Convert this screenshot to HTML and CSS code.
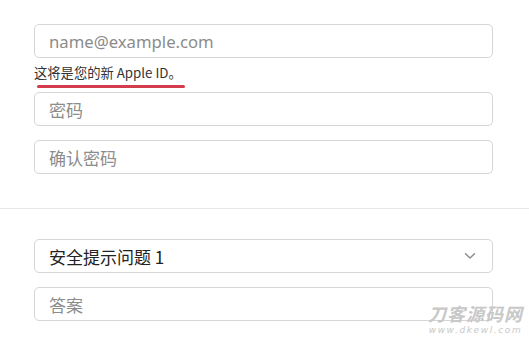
FILE: index.html
```html
<!DOCTYPE html>
<html lang="zh-CN">
<head>
<meta charset="utf-8">
<title>Apple ID</title>
<link rel="stylesheet" href="styles.css">
</head>
<body>
<main class="page">
  <section class="group">
    <input class="field" type="email" placeholder="name@example.com">
    <div class="hint"><span class="hint-text">这将是您的新 Apple ID。</span></div>
    <input class="field" type="password" placeholder="密码">
    <input class="field gap" type="password" placeholder="确认密码">
  </section>
  <hr class="divider">
  <section class="group lower">
    <div class="field select">
      <span class="select-text">安全提示问题 1</span>
      <svg class="chev" width="12" height="8" viewBox="0 0 12 8"><path d="M1.5 1.8 L6 6 L10.5 1.8" fill="none" stroke="#8a8a8e" stroke-width="1.4" stroke-linecap="round" stroke-linejoin="round"/></svg>
    </div>
    <input class="field gap" type="text" placeholder="答案">
  </section>
  <div class="watermark">
    <span class="wm-big">刀客源码网</span>
    <span class="wm-small">www.dkewl.com</span>
  </div>
</main>
</body>
</html>
```
FILE: styles.css
```css
* { box-sizing: border-box; }
html, body { margin: 0; padding: 0; background: #fff; }
body {
  font-family: "Noto Sans", "Noto Sans CJK SC", sans-serif;
  color: #333;
  width: 529px;
  height: 339px;
  overflow: hidden;
}
.page { position: relative; height: 339px; }
.group {
  display: flex;
  flex-direction: column;
  padding: 24px 0 0 34px;
  width: 493px;
}
.field {
  display: block;
  width: 459px;
  height: 34px;
  border: 1px solid #d6d6d6;
  border-radius: 5px;
  background: #fff;
  padding: 0 14px;
  font-family: "Noto Sans", "Noto Sans CJK SC", sans-serif;
  font-size: 16.7px;
  color: #333;
  outline: none;
  margin: 0;
}
.field::placeholder { color: #8c8c8c; }
.gap { margin-top: 14px; }
.hint {
  height: 34px;
  padding-top: 6px;
  display: flex;
  flex-direction: column;
  align-items: flex-start;
}
.hint-text {
  display: inline-block;
  font-size: 13.3px;
  line-height: 17px;
  color: #333;
  font-family: "Noto Sans CJK SC", sans-serif;
  position: relative;
}
.hint-text::after {
  content: "";
  position: absolute;
  left: 3px;
  right: -3px;
  bottom: -7px;
  height: 3px;
  border-radius: 2px;
  background: #d33c4c;
}
.divider {
  border: 0;
  border-top: 1px solid #e6e6e6;
  margin: 34px 0 0 0;
  width: 529px;
}
.lower { padding-top: 30px; }
.select {
  display: flex;
  align-items: center;
  justify-content: space-between;
  padding: 0 16px 0 14px;
}
.select-text {
  font-family: "Noto Sans CJK SC", sans-serif;
  font-size: 17px;
  color: #222;
}
.field[type="password"], .field[type="text"] {
  font-family: "Noto Sans CJK SC", sans-serif;
  font-size: 17px;
}
.watermark {
  position: absolute;
  right: 6px;
  bottom: 5px;
  display: flex;
  flex-direction: column;
  align-items: center;
  gap: 5px;
  color: #c8c8c8;
  font-style: italic;
  line-height: 1;
}
.wm-big {
  font-family: "Noto Sans CJK SC", sans-serif;
  font-weight: 700;
  font-size: 18px;
  line-height: 16px;
  letter-spacing: 1px;
}
.wm-small {
  font-family: "DejaVu Sans", sans-serif;
  font-size: 9px;
  line-height: 8px;
  letter-spacing: 1.6px;
}
```
